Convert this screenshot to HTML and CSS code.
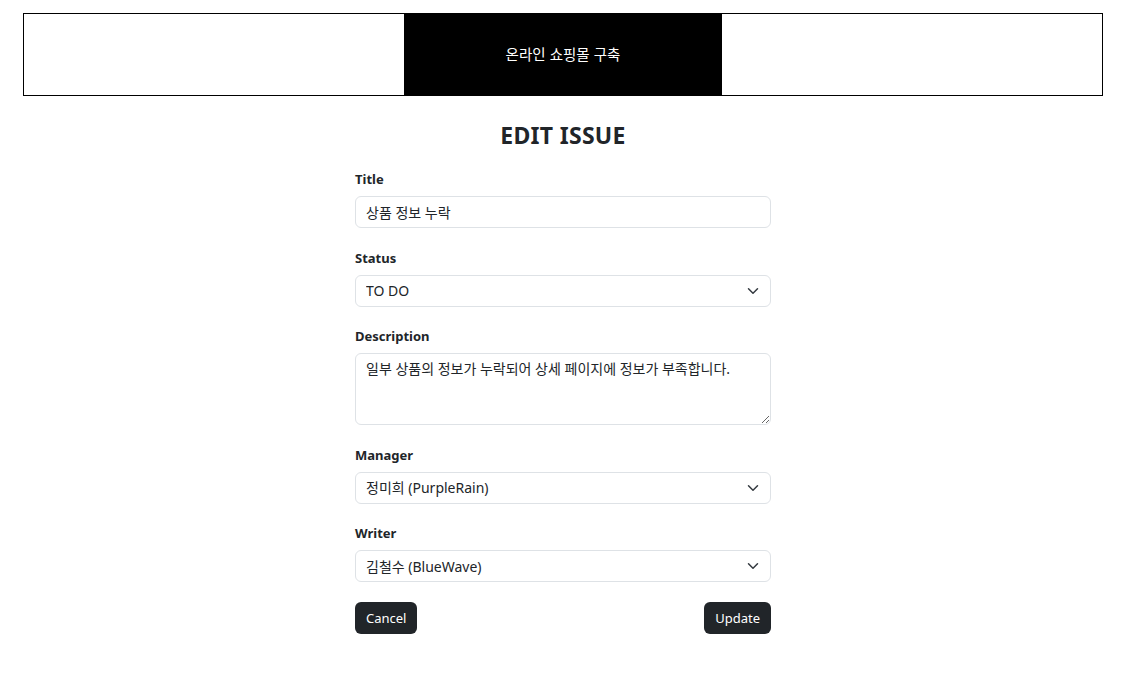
FILE: index.html
```html
<!DOCTYPE html>
<html lang="ko">
<head>
<meta charset="utf-8">
<title>Edit Issue</title>
<link rel="stylesheet" href="styles.css">
</head>
<body>
<header class="top">
  <div class="brand">온라인 쇼핑몰 구축</div>
</header>
<main class="page">
  <h1 class="heading">EDIT ISSUE</h1>
  <form class="form">
    <div class="field">
      <label class="label" for="title">Title</label>
      <input class="control" id="title" type="text" value="상품 정보 누락">
    </div>
    <div class="field">
      <label class="label" for="status">Status</label>
      <div class="select-wrap">
        <select class="control select" id="status">
          <option>TO DO</option>
          <option>IN PROGRESS</option>
          <option>DONE</option>
        </select>
        <svg class="chev" width="12" height="12" viewBox="0 0 16 16"><path d="M2 5l6 6 6-6" fill="none" stroke="#343a40" stroke-width="2" stroke-linecap="round" stroke-linejoin="round"/></svg>
      </div>
    </div>
    <div class="field">
      <label class="label" for="desc">Description</label>
      <textarea class="control area" id="desc">일부 상품의 정보가 누락되어 상세 페이지에 정보가 부족합니다.</textarea>
    </div>
    <div class="field">
      <label class="label" for="manager">Manager</label>
      <div class="select-wrap">
        <select class="control select" id="manager">
          <option>정미희 (PurpleRain)</option>
        </select>
        <svg class="chev" width="12" height="12" viewBox="0 0 16 16"><path d="M2 5l6 6 6-6" fill="none" stroke="#343a40" stroke-width="2" stroke-linecap="round" stroke-linejoin="round"/></svg>
      </div>
    </div>
    <div class="field">
      <label class="label" for="writer">Writer</label>
      <div class="select-wrap">
        <select class="control select" id="writer">
          <option>김철수 (BlueWave)</option>
        </select>
        <svg class="chev" width="12" height="12" viewBox="0 0 16 16"><path d="M2 5l6 6 6-6" fill="none" stroke="#343a40" stroke-width="2" stroke-linecap="round" stroke-linejoin="round"/></svg>
      </div>
    </div>
    <div class="actions">
      <button type="button" class="btn">Cancel</button>
      <button type="submit" class="btn">Update</button>
    </div>
  </form>
</main>
</body>
</html>
```
FILE: styles.css
```css
html, body {
  margin: 0;
  padding: 0;
  background: #fff;
}
body {
  font-family: "Noto Sans", "Noto Sans CJK KR", sans-serif;
  color: #212529;
  font-size: 14px;
  padding: 13px 19px 0 23px;
}
.top {
  border: 1px solid #000;
  height: 81px;
  display: flex;
  justify-content: center;
}
.brand {
  width: 318px;
  background: #000;
  color: #fff;
  display: flex;
  align-items: center;
  justify-content: center;
  font-family: "Noto Sans CJK KR", sans-serif;
  font-size: 14.5px;
  padding-bottom: 2px;
  box-sizing: border-box;
}
.page {
  width: 416px;
  margin: 0 auto;
}
.heading {
  margin: 21px 0 14px;
  text-align: center;
  font-size: 23px;
  line-height: 36px;
  font-weight: 700;
  letter-spacing: 0.3px;
}
.form {
  display: flex;
  flex-direction: column;
  gap: 17.5px;
}
.field {
  display: flex;
  flex-direction: column;
}
.label {
  font-size: 13px;
  font-weight: 700;
  line-height: 25px;
  margin-bottom: 4px;
}
.control {
  box-sizing: border-box;
  width: 100%;
  height: 32px;
  border: 1px solid #dee2e6;
  border-radius: 6px;
  padding: 0 10px;
  font-family: "Noto Sans", "Noto Sans CJK KR", sans-serif;
  font-size: 14px;
  color: #212529;
  background: #fff;
  outline: none;
}
.select-wrap {
  position: relative;
}
.select {
  appearance: none;
  -webkit-appearance: none;
  padding-right: 32px;
}
.chev {
  position: absolute;
  right: 12px;
  top: 10px;
  pointer-events: none;
}
.area {
  height: 72px;
  padding: 4px 10px;
  line-height: 22px;
  resize: vertical;
}
.actions {
  display: flex;
  justify-content: space-between;
  margin-top: 2.5px;
}
.btn {
  height: 32px;
  padding: 0 11px;
  border: none;
  border-radius: 6px;
  background: #212529;
  color: #fff;
  font-family: "Noto Sans", sans-serif;
  font-size: 13px;
  cursor: pointer;
}
```
